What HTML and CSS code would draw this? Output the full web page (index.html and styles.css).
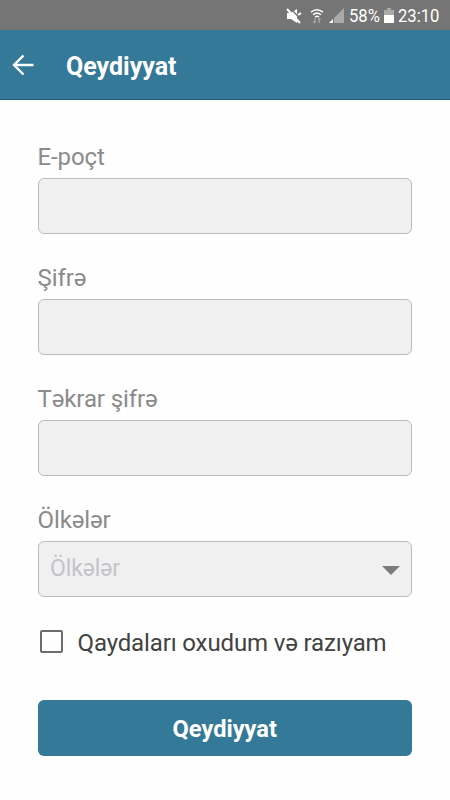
FILE: index.html
```html
<!DOCTYPE html>
<html lang="az">
<head>
<meta charset="utf-8">
<title>Qeydiyyat</title>
<link rel="stylesheet" href="styles.css">
</head>
<body>
<div class="status">
  <svg class="mute" width="16" height="16" viewBox="0 0 16 16"><path d="M1 5h4l6-4v14l-6-4H1z" fill="#fff"/><path d="M4 0l12 12.500" stroke="#757575" stroke-width="1.4"/><path d="M1 1l13 14M12 7l3-2" stroke="#fff" stroke-width="2"/></svg>
  <svg class="wifi" width="14" height="16" viewBox="0 0 14 16" fill="none" stroke="#fff" stroke-width="1.5"><path d="M1 4.2q6-5 12 0M3 6.8q4-3.400 8 0M5 9q2-1.500 4 0"/><path d="M5 10v5M3.500 13.300L5 15M9 15v-5M9 10l1.500 1.700" stroke="#aaa" stroke-width="1.3"/></svg>
  <svg class="signal" width="15" height="15" viewBox="0 0 15 15"><path d="M15 0v15H0z" fill="#aaa"/><path d="M4 11v4H0z" fill="#fff"/><path d="M4.500 9v6" stroke="#757575"/></svg>
  <span class="percent">58%</span>
  <svg class="battery" width="10" height="15" viewBox="0 0 10 15"><path d="M3 0h4v2h3v5H0V2h3z" fill="#aaa"/><path d="M0 7h10v8H0z" fill="#fff"/></svg>
  <span class="clock">23:10</span>
</div>
<header class="bar">
  <svg class="back" width="22" height="22" viewBox="0 0 22 22" fill="none" stroke="#fff" stroke-width="2.4"><path d="M21.500 11H2M11.500 1.500L2 11l9.500 9.500"/></svg>
  <h1 class="title">Qeydiyyat</h1>
</header>
<form class="form">
  <label class="field"><span class="label">E-poçt</span><input class="box" type="text"></label>
  <label class="field"><span class="label">Şifrə</span><input class="box" type="password"></label>
  <label class="field"><span class="label">Təkrar şifrə</span><input class="box" type="password"></label>
  <div class="field"><span class="label">Ölkələr</span><div class="box select"><span class="placeholder">Ölkələr</span><svg class="caret" width="18" height="9" viewBox="0 0 18 9"><path d="M0 0h18L9 9z" fill="#7b7b7b"/></svg></div></div>
  <div class="agree"><span class="check"></span><span class="terms">Qaydaları oxudum və razıyam</span></div>
  <button class="submit" type="button">Qeydiyyat</button>
</form>
</body>
</html>
```
FILE: styles.css
```css
* { box-sizing: border-box; }
body {
  margin: 0;
  height: 800px;
  overflow: hidden;
  background: #fefefe;
  font-family: Roboto, sans-serif;
}
.status {
  height: 30px;
  display: flex;
  align-items: center;
  justify-content: flex-end;
  padding: 1px 10px 0 0;
  background: #757575;
  color: #fff;
  font-size: 18.5px;
}
.mute { margin-right: 8px; }
.wifi { margin-right: 5px; }
.signal { margin-right: 5px; }
.percent, .clock {
  transform: scaleX(.9);
  transform-origin: left center;
}
.percent { width: 30px; margin-right: 5px; }
.battery { margin-right: 4px; }
.clock { width: 42px; }
.bar {
  height: 70px;
  display: flex;
  align-items: center;
  gap: 32px;
  padding: 3px 0 0 12px;
  background: #347998;
  border-bottom: 1px solid #1d6380;
}
.back { margin-bottom: 3px; }
.title {
  margin: 0;
  color: #fff;
  font-size: 25px;
  font-weight: 700;
}
.form {
  display: flex;
  flex-direction: column;
  padding: 42px 38px 0 37.5px;
}
.field {
  display: flex;
  flex-direction: column;
  gap: 8px;
  height: 92px;
  margin-bottom: 29.1px;
}
.label {
  height: 28px;
  line-height: 30px;
  color: #8b8b8b;
  font-size: 24px;
  letter-spacing: -.1px;
  white-space: nowrap;
}
.box {
  width: 100%;
  height: 56px;
  border: 1px solid #bcbcbc;
  border-radius: 6px;
  background: #f0f0f0;
}
.select {
  display: flex;
  align-items: center;
  justify-content: space-between;
  padding: 0 11px 0 11.5px;
}
.placeholder {
  padding-bottom: 1px;
  color: #c4c4ca;
  font-size: 23px;
  letter-spacing: -.1px;
}
.caret { margin-top: 2px; }
.agree {
  height: 30px;
  display: flex;
  align-items: center;
  gap: 15px;
  padding-left: 2px;
}
.check {
  width: 23px;
  height: 23px;
  border: 2px solid #6c6c6c;
  border-radius: 2px;
}
.terms {
  padding-top: 4px;
  color: #424242;
  font-size: 24px;
  letter-spacing: -.13px;
  white-space: nowrap;
}
.submit {
  height: 56px;
  margin-top: 43.5px;
  padding: 3px 0 0;
  border: 0;
  border-radius: 6px;
  background: #347998;
  color: #fff;
  font: 700 23.6px Roboto, sans-serif;
}
```
